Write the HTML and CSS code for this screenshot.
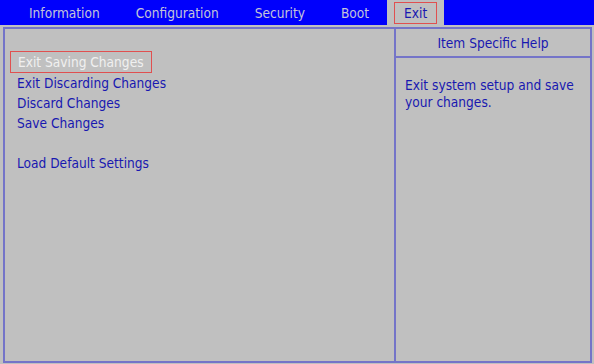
FILE: index.html
```html
<!DOCTYPE html>
<html lang="en">
<head>
    <meta charset="UTF-8">
    <meta name="viewport" content="width=device-width, initial-scale=1.0">
    <title>Setup - Exit</title>
    <link rel="stylesheet" href="styles.css">
</head>
<body>
    <div class="menubar">
        <div class="tab">Information</div>
        <div class="tab">Configuration</div>
        <div class="tab">Security</div>
        <div class="tab">Boot</div>
        <div class="tab active"><span class="tab-label">Exit</span></div>
    </div>
    <div class="frame">
        <div class="options">
            <div class="option selected">Exit Saving Changes</div>
            <div class="option">Exit Discarding Changes</div>
            <div class="option">Discard Changes</div>
            <div class="option">Save Changes</div>
            <div class="option spacer"></div>
            <div class="option">Load Default Settings</div>
        </div>
        <div class="help">
            <div class="help-title">Item Specific Help</div>
            <div class="help-text">Exit system setup and save your changes.</div>
        </div>
    </div>
</body>
</html>
```

FILE: styles.css
```css
body {
    margin: 0;
    background-color: #c0c0c0;
    font-family: "DejaVu Sans Condensed", "DejaVu Sans", sans-serif;
    font-size: 13.6px;
    color: #1818b0;
}
.menubar {
    display: flex;
    height: 25px;
    padding-left: 11px;
    background-color: #0000fc;
}
.tab {
    display: flex;
    align-items: center;
    padding: 0 18px;
    color: #c4c4d8;
}
.tab.active {
    padding: 0 7px;
    background-color: #c0c0c0;
}
.tab-label {
    padding: 2px 9px;
    border: 1px solid #e05050;
    color: #1818b0;
}
.frame {
    display: flex;
    height: 332px;
    margin: 2px 2px 0 3px;
    border: 2px solid #7474c8;
}
.options {
    width: 384px;
    padding: 22px 0 0 5px;
    border-right: 2px solid #7474c8;
}
.option {
    height: 20px;
    line-height: 20px;
    padding: 0 7px;
}
.option.selected {
    display: inline-block;
    height: 20px;
    line-height: 21px;
    border: 1px solid #e05050;
    color: #f0f0f0;
}
.option.spacer {
    height: 20px;
}
.help {
    flex: 1;
}
.help-title {
    height: 27px;
    line-height: 28px;
    text-align: center;
    border-bottom: 2px solid #7474c8;
}
.help-text {
    padding: 19px 10px 0 9px;
    line-height: 17px;
}
```
